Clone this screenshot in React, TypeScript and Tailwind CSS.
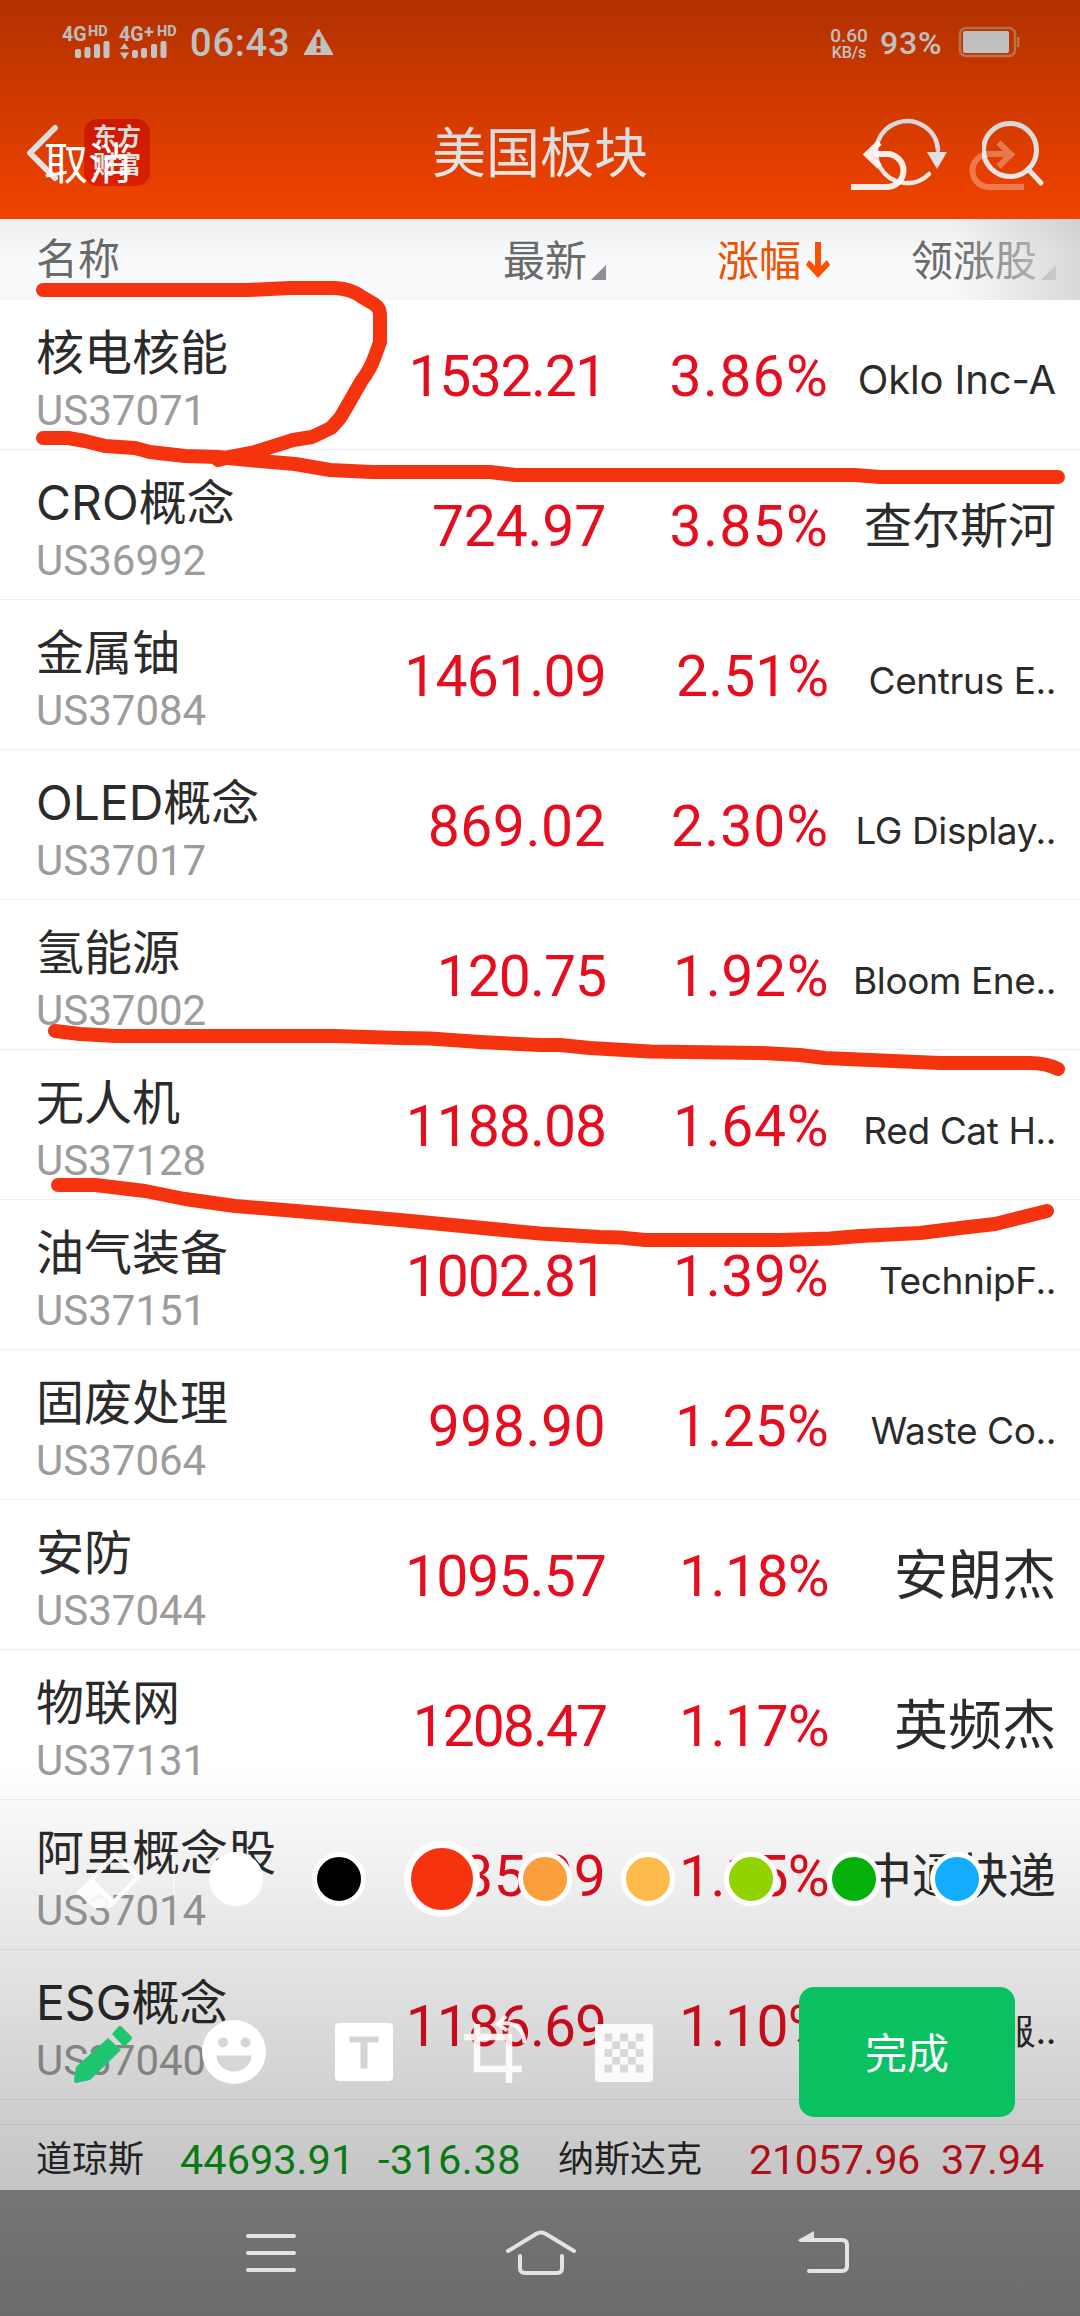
import { clsx } from 'clsx';

type Sector = {
  name: string;
  code: string;
  price: string;
  priceClass: string;
  change: string;
  changeClass: string;
  leader: string;
  leaderClass?: string;
};

const LATIN = "pt-[13px] font-['Inter'] text-[37px] tracking-[-0.4px]";

const sectors: Sector[] = [
  { name: '核电核能', code: 'US37071', price: '1532.21', priceClass: 'tracking-[-1.4px]', change: '3.86%', changeClass: 'tracking-[1.3px]', leader: 'Oklo Inc-A', leaderClass: "pt-[11px] font-['Inter'] text-[40px] tracking-[-0.1px]" },
  { name: 'CRO概念', code: 'US36992', price: '724.97', priceClass: 'tracking-[-0.2px]', change: '3.85%', changeClass: 'tracking-[1.3px]', leader: '查尔斯河' },
  { name: '金属铀', code: 'US37084', price: '1461.09', priceClass: 'tracking-[-0.8px]', change: '2.51%', changeClass: 'tracking-[0px]', leader: 'Centrus E..', leaderClass: LATIN },
  { name: 'OLED概念', code: 'US37017', price: '869.02', priceClass: 'tracking-[0.5px]', change: '2.30%', changeClass: 'tracking-[1px]', leader: 'LG Display..', leaderClass: LATIN },
  { name: '氢能源', code: 'US37002', price: '120.75', priceClass: 'tracking-[-1px]', change: '1.92%', changeClass: 'tracking-[0.6px]', leader: 'Bloom Ene..', leaderClass: LATIN },
  { name: '无人机', code: 'US37128', price: '1188.08', priceClass: 'tracking-[-1px]', change: '1.64%', changeClass: 'tracking-[0.6px]', leader: 'Red Cat H..', leaderClass: LATIN },
  { name: '油气装备', code: 'US37151', price: '1002.81', priceClass: 'tracking-[-1px]', change: '1.39%', changeClass: 'tracking-[0.6px]', leader: 'TechnipF..', leaderClass: LATIN },
  { name: '固废处理', code: 'US37064', price: '998.90', priceClass: 'tracking-[0.5px]', change: '1.25%', changeClass: 'tracking-[0.2px]', leader: 'Waste Co..', leaderClass: LATIN },
  { name: '安防', code: 'US37044', price: '1095.57', priceClass: 'tracking-[-0.9px]', change: '1.18%', changeClass: 'tracking-[-0.6px]', leader: '安朗杰', leaderClass: 'text-[54px] pt-[4px]' },
  { name: '物联网', code: 'US37131', price: '1208.47', priceClass: 'tracking-[-2px]', change: '1.17%', changeClass: 'tracking-[-0.6px]', leader: '英频杰', leaderClass: 'text-[54px] pt-[4px]' },
  { name: '阿里概念股', code: 'US37014', price: '935.99', priceClass: 'tracking-[0.3px]', change: '1.15%', changeClass: 'tracking-[-0.6px]', leader: '中通快递' },
  { name: 'ESG概念', code: 'US37040', price: '1186.69', priceClass: 'tracking-[-1px]', change: '1.10%', changeClass: 'tracking-[-0.6px]', leader: '服..', leaderClass: LATIN },
];

const swatches = [
  'bg-white',
  'bg-black',
  'bg-[#f6330f]',
  'bg-[#fa9f3c]',
  'bg-[#ffbb49]',
  'bg-[#91d300]',
  'bg-[#05b00a]',
  'bg-[#12adff]',
];

const StatusBar = () => (
  <div className="flex h-[84px] items-center pl-[62px] pr-[60px] text-white">
    <svg width="120" height="40" viewBox="0 0 120 40" className="mt-[2px] overflow-visible fill-white">
      <g fontFamily="Roboto, sans-serif" fontWeight="700">
        <text x="0" y="18" fontSize="19.500">4G</text>
        <text x="26" y="13" fontSize="14.500">HD</text>
        <text x="57" y="18" fontSize="19.500">4G</text>
        <text x="82" y="15" fontSize="18">+</text>
        <text x="95" y="13" fontSize="14.500">HD</text>
      </g>
      <rect x="13" y="26" width="6" height="9" rx="2" />
      <rect x="22.500" y="24" width="6" height="11" rx="2" />
      <rect x="32" y="21" width="6" height="14" rx="2" />
      <rect x="41.500" y="18" width="6" height="17" rx="2" />
      <path d="M58 26l4.500-6 4.500 6zM58 29.500h9l-4.500 7z" />
      <rect x="70" y="27" width="6" height="8" rx="2" />
      <rect x="79" y="25" width="6" height="10" rx="2" />
      <rect x="89" y="21" width="6" height="14" rx="2" />
      <rect x="98.500" y="18" width="6" height="17" rx="2" />
    </svg>
    <span className="ml-[8px] w-[104px] pt-[2px] text-[38px] font-medium leading-none tracking-[0.8px]">06:43</span>
    <svg width="31" height="28" viewBox="0 0 31 28" className="ml-[9px]">
      <path d="M15.500 1L30 26.500H1z" className="fill-white stroke-white" strokeLinejoin="round" />
      <path d="M15.500 9v9M15.500 20.500v4" stroke="#fb4500" strokeWidth="4" />
    </svg>
    <div className="ml-auto flex w-[42px] flex-col items-center pt-[2px] font-medium leading-none">
      <span className="text-[19px]">0.60</span>
      <span className="text-[16px]">KB/s</span>
    </div>
    <span className="ml-[10px] w-[67px] pt-[2px] text-[32px] font-medium leading-none tracking-[0.8px]">93%</span>
    <svg width="62" height="32" viewBox="0 0 62 32" className="ml-[11px]">
      <rect x="2" y="2" width="55" height="28" rx="6" fill="none" stroke="#f49a66" strokeWidth="2.500" />
      <rect x="5" y="5" width="46" height="22" rx="2" fill="#fff" />
      <rect x="59" y="11" width="2.500" height="10" fill="#f49a66" />
    </svg>
  </div>
);

const TitleBar = () => (
  <div className="flex h-[135px] items-center pt-[1px] text-white">
    <svg width="36" height="60" viewBox="0 0 36 60" className="ml-[26px] fill-none stroke-white" strokeWidth="6" strokeLinecap="round" strokeLinejoin="round">
      <path d="M29 6L4 31l25 25" />
    </svg>
    <div className="ml-[22px] flex h-[67px] w-[66px] flex-col items-center justify-center rounded-[14px] bg-[#f02002] pb-[3px] text-[24px] font-bold leading-[28px]">
      <span>东方</span>
      <span>财富</span>
    </div>
    <h1 className="ml-[282px] w-[215px] whitespace-nowrap pt-[5px] text-[54px] leading-none">美国板块</h1>
    <svg width="80" height="80" viewBox="0 0 80 80" className="ml-[220px] mt-[4px] fill-none stroke-white" strokeWidth="4.500" strokeLinecap="round">
      <path d="M62 60A31 31 0 1 1 71 36" />
      <path d="M60 38h20l-10 17z" className="fill-white stroke-none" />
    </svg>
    <svg width="64" height="68" viewBox="0 0 64 68" className="ml-[35px] mt-[6px] fill-none stroke-white" strokeWidth="5" strokeLinecap="round">
      <circle cx="28" cy="29" r="26.500" />
      <path d="M46 48l13 14" />
    </svg>
  </div>
);

const SortMark = () => (
  <svg width="15" height="15" viewBox="0 0 15 15" className="ml-[4px] mt-[24px] fill-[#8e8e96]">
    <path d="M15 0v15H0z" />
  </svg>
);

const ColumnHeads = () => (
  <div className="relative grid h-[81px] grid-cols-[340px_266px_224px_226px] items-center bg-[#f8f9fb] text-[42px] leading-none text-[#6a6a6a]">
    <span className="pl-[36px]">名称</span>
    <div className="flex justify-end pt-[4px]">
      最新
      <SortMark />
    </div>
    <div className="flex justify-end pt-[4px] text-[#f25000]">
      涨幅
      <svg width="24" height="38" viewBox="0 0 24 38" className="ml-[5px] fill-[#fb5000]">
        <path d="M9 1h6v24l6-6 3 5-12 13L0 24l3-5 6 6z" />
      </svg>
    </div>
    <div className="flex justify-end pt-[4px]">
      领涨股
      <SortMark />
    </div>
    {/* hint that the table scrolls sideways */}
    <div className="absolute inset-y-0 right-0 w-[130px] bg-gradient-to-r from-[#dcdddd]/0 to-[#d8d9d9]" />
  </div>
);

const SectorRow = ({ sector }: { sector: Sector }) => (
  <div className="grid h-[150px] grid-cols-[340px_266px_223px_227px] items-center whitespace-nowrap border-b border-[#eeeeef] bg-white">
    <div className="self-start pl-[36px] pt-[24px]">
      <div className="font-['Inter','Noto_Sans_CJK_SC',sans-serif] text-[48px] leading-[58px] text-[#2b2b2b]">{sector.name}</div>
      <div className="text-[42px] leading-[58px] text-[#9c9c9c]">{sector.code}</div>
    </div>
    <div className={clsx('pt-[5px] text-right text-[57px] text-[#e60d1e]', sector.priceClass)}>{sector.price}</div>
    <div className={clsx('pt-[5px] text-right text-[57px] text-[#e60d1e]', sector.changeClass)}>{sector.change}</div>
    <div className={clsx('text-right text-[#2b2b2b]', sector.leaderClass ?? 'pt-[5px] text-[48px]')}>{sector.leader}</div>
  </div>
);

const IndexBar = () => (
  <div className="flex h-[66px] items-center whitespace-nowrap border-t border-[#eeeeef] bg-white pl-[36px] pt-[4px] text-[41.500px] leading-none">
    <span className="w-[144px] text-[36px] text-[#2b2b2b]">道琼斯</span>
    <span className="w-[198px] text-[#0a9a18]">44693.91</span>
    <span className="w-[180px] tracking-[0.6px] text-[#0a9a18]">-316.38</span>
    <span className="w-[191px] text-[36px] text-[#2b2b2b]">纳斯达克</span>
    <span className="w-[192px] tracking-[-0.4px] text-[#dd1420]">21057.96</span>
    <span className="tracking-[-0.3px] text-[#dd1420]">37.94</span>
  </div>
);

// Freehand strokes drawn by the user on top of the screenshot
const Markup = () => (
  <svg
    width="1080"
    height="2316"
    viewBox="0 0 1080 2316"
    className="absolute inset-0 fill-none stroke-[#f6330f]"
    strokeWidth="14"
    strokeLinecap="round"
    strokeLinejoin="round"
  >
    <path d="M43 290H248L290 288H335Q352 289 362 297L374 304Q380 308 380 314V342L375 356Q370 370 362 380L346 408L340 418L331 428L312 437L293 440L255 452L229 457L218 460" />
    <path d="M43 438H68L85 441L105 446L135 448L150 452L185 456L218 457L260 461L295 464L330 470L372 472H490L515 475H855L880 477H1058" />
    <path d="M55 1031L80 1034L115 1036H335L400 1038L430 1038.500L480 1042L540 1045L560 1045L590 1048L650 1051.500L760 1053L800 1055L825 1058L870 1060L940 1063H1030Q1046 1063 1058 1069" />
    <path d="M58 1185H95L145 1191L185 1199L235 1206L320 1213L400 1220L540 1233.500L600 1237L620 1237.500L645 1240H780L830 1238.500L860 1236L920 1233L960 1228L995 1224L1047 1211" />
  </svg>
);

const EditorTop = () => (
  <div className="absolute inset-x-0 top-[84px] flex h-[135px] items-center text-white">
    <button className="ml-[44px] mt-[26px] text-[44px] leading-none">取消</button>
    <svg width="62" height="56" viewBox="0 0 62 56" className="ml-[718px] mt-[28px] fill-none stroke-white opacity-90" strokeWidth="6">
      <path d="M1 49h36a16.500 16.500 0 0 0 0-33H18M29.500 4.500L17 16.500l12.500 12" />
    </svg>
    <svg width="62" height="56" viewBox="0 0 62 56" className="ml-[53px] mt-[28px] fill-none stroke-white opacity-30" strokeWidth="6">
      <path d="M59 49H24a16.500 16.500 0 0 1 0-33h22M33.500 4.500L46 16.500l-12.500 12" />
    </svg>
  </div>
);

const ColorPicker = () => (
  <div className="flex h-[76px] items-center">
    <svg width="66" height="60" viewBox="0 0 66 60" className="ml-[76px]">
      <path d="M39 6L62 28L37 54L15 31z" fill="none" stroke="#fff" strokeWidth="4.500" strokeLinejoin="round" opacity=".9" />
      <path d="M16 29L40 53L34 59H18L0 43z" fill="#fff" opacity=".9" />
    </svg>
    <div className="ml-[31px] h-[36px] w-[2px] bg-white/40" />
    <div className="ml-[9px] flex items-center">
      {swatches.map((color, i) => (
        <div key={color} className="flex w-[103px] justify-center">
          <div
            className={clsx(
              'shrink-0 rounded-full border-white',
              color,
              i === 2 ? 'size-[76px] border-[7px]' : 'size-[54px] border-[5px]',
            )}
          />
        </div>
      ))}
    </div>
  </div>
);

const mosaic = [0, 1, 2, 3, 4].flatMap((r) =>
  [0, 1, 2, 3, 4].filter((c) => (r + c) % 2 === 0).map((c) => ({ r, c })),
);

const Tools = () => (
  <div className="flex h-[130px] items-center">
    <svg width="60" height="60" viewBox="0 0 60 60" className="ml-[73px] mt-[2px] fill-[#1dc56e]">
      <path d="M35 15L48 27L17 57L3 60Q1 60 1 57L3 44z" />
      <path d="M39 11L45 4Q47 2 49 4L58 13Q60 15 58 17L51 24z" />
    </svg>
    <svg width="64" height="64" viewBox="0 0 64 64" className="ml-[69px]">
      <circle cx="32" cy="32" r="32" fill="#fff" />
      <g fill="#d7d7d7">
        <circle cx="21" cy="22.500" r="5" />
        <circle cx="43.500" cy="22.500" r="5" />
        <path d="M14.500 35.500h35a17.500 16 0 0 1-35 0z" />
      </g>
    </svg>
    <svg width="58" height="58" viewBox="0 0 58 58" className="ml-[69px]">
      <rect width="58" height="58" rx="4" fill="#fff" />
      <path d="M14.500 13.500h29v6H32.500v26h-7v-26h-11z" fill="#d5d5d5" />
    </svg>
    <svg width="66" height="70" viewBox="0 0 66 70" className="ml-[70px] mb-[4px] fill-none stroke-white opacity-90" strokeWidth="6.500">
      <path d="M14 9V54H59M1 22H46V68" />
      <path d="M34 8.500Q60 5 61.500 28M43 1l-8 8 9 6.500" strokeWidth="4" />
    </svg>
    <svg width="58" height="58" viewBox="0 0 58 58" className="ml-[66px] mt-[2px]">
      <rect width="58" height="58" rx="3" fill="#fbfbfb" />
      {mosaic.map(({ r, c }) => (
        <rect key={`${r}-${c}`} x={9.5 + c * 7.8} y={9.5 + r * 7.8} width="7.800" height="7.800" fill="#d8d8d8" />
      ))}
    </svg>
    <button className="ml-[146px] h-[130px] w-[216px] rounded-[15px] bg-[#09c160] pt-[5px] text-[42px] text-white">完成</button>
  </div>
);

const EditorBottom = () => (
  <div className="absolute inset-x-0 top-[1841px] flex flex-col gap-[70px]">
    <ColorPicker />
    <Tools />
  </div>
);

const NavIcons = () => (
  <div className="absolute inset-x-0 bottom-0 flex h-[126px] items-center">
    <svg width="50" height="40" viewBox="0 0 50 40" className="ml-[246px] fill-none stroke-[#e3e3e3]" strokeWidth="4" strokeLinecap="round">
      <path d="M2 3h46M2 20h46M2 37h46" />
    </svg>
    <svg width="72" height="46" viewBox="0 0 72 46" className="ml-[209px] fill-none stroke-[#e3e3e3]" strokeWidth="4" strokeLinecap="round" strokeLinejoin="round">
      <path d="M3 21L31 4Q36 1 41 4L69 21M15 26v12q0 5 5 5h32q5 0 5-5V26" />
    </svg>
    <svg width="52" height="44" viewBox="0 0 52 44" className="ml-[221px] fill-none stroke-[#e3e3e3]" strokeWidth="4" strokeLinecap="round">
      <path d="M4 9h40q5 0 5 5v21q0 5-5 5H11" />
      <path d="M0 9L16 0v9l-14 2z" className="fill-[#e3e3e3] stroke-none" />
    </svg>
  </div>
);

export default function App() {
  return (
    <div className="relative h-[2316px] w-[1080px] overflow-hidden bg-white font-['Roboto','Noto_Sans_CJK_SC',sans-serif]">
      <header className="h-[219px] bg-[#fd4600]">
        <StatusBar />
        <TitleBar />
      </header>
      <ColumnHeads />
      <main>
        {sectors.map((sector) => (
          <SectorRow key={sector.code} sector={sector} />
        ))}
      </main>
      <div className="h-[24px] bg-white" />
      <IndexBar />
      <div className="h-[126px] bg-[#999]" />

      <Markup />

      {/* shades behind the editor controls */}
      <div className="absolute inset-x-0 top-0 h-[256px] bg-gradient-to-b from-black/30 to-black/0" />
      <div className="absolute inset-x-0 bottom-0 h-[556px] bg-gradient-to-b from-black/0 to-black/30" />

      <EditorTop />
      <EditorBottom />
      <NavIcons />
    </div>
  );
}
